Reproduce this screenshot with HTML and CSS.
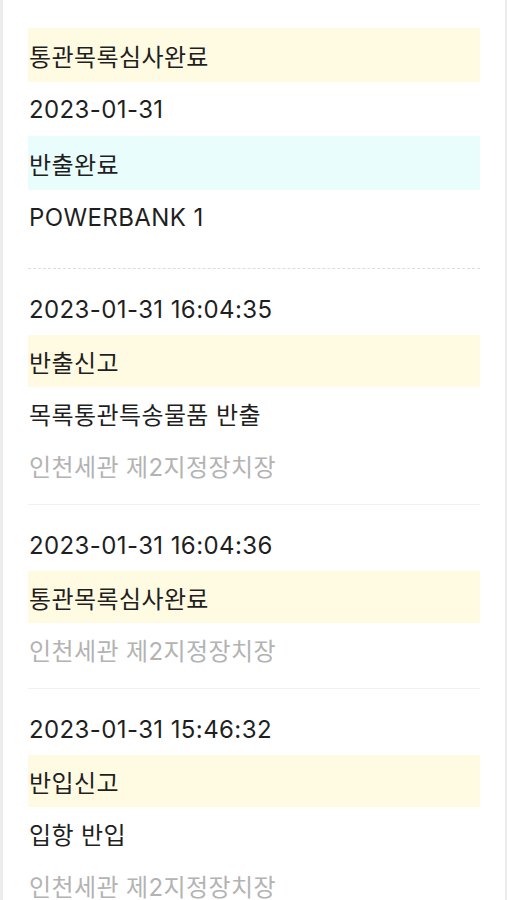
FILE: index.html
```html
<!DOCTYPE html>
<html lang="ko">
<head>
    <meta charset="UTF-8">
    <meta name="viewport" content="width=device-width, initial-scale=1.0">
    <title>통관 진행정보</title>
    <link rel="stylesheet" href="styles.css">
</head>
<body>
    <div class="page">
        <div class="summary">
            <div class="row status-yellow">통관목록심사완료</div>
            <div class="row">2023-01-31</div>
            <div class="row status-cyan">반출완료</div>
            <div class="row">POWERBANK 1</div>
        </div>

        <div class="event">
            <div class="row">2023-01-31 16:04:35</div>
            <div class="row status-yellow">반출신고</div>
            <div class="row">목록통관특송물품 반출</div>
            <div class="row place">인천세관 제2지정장치장</div>
        </div>

        <div class="event">
            <div class="row">2023-01-31 16:04:36</div>
            <div class="row status-yellow">통관목록심사완료</div>
            <div class="row place">인천세관 제2지정장치장</div>
        </div>

        <div class="event">
            <div class="row">2023-01-31 15:46:32</div>
            <div class="row status-yellow">반입신고</div>
            <div class="row">입항 반입</div>
            <div class="row place">인천세관 제2지정장치장</div>
        </div>
    </div>
</body>
</html>
```

FILE: styles.css
```css
body {
    margin: 0;
    background-color: #ececec;
    font-family: Inter, "Noto Sans CJK KR", sans-serif;
    color: #1f1f1f;
    height: 900px;
    overflow: hidden;
}
.page {
    margin: 0 2px 0 3px;
    background-color: #fff;
    min-height: 900px;
    padding: 0 25px 0 25px;
}
.summary {
    padding: 28px 0 24px;
    border-bottom: 1px dashed #ddd;
}
.summary .row {
    height: 54px;
}
.event {
    padding: 14px 0 13px;
    border-bottom: 1px solid #f0f0f0;
}
.row {
    display: flex;
    align-items: center;
    height: 52px;
    font-size: 24px;
    letter-spacing: 0.4px;
    padding-left: 1px;
}
.status-yellow {
    background-color: #fffbe3;
}
.status-cyan {
    background-color: #eafdfd;
}
.place {
    color: #b3b3b3;
}
```
